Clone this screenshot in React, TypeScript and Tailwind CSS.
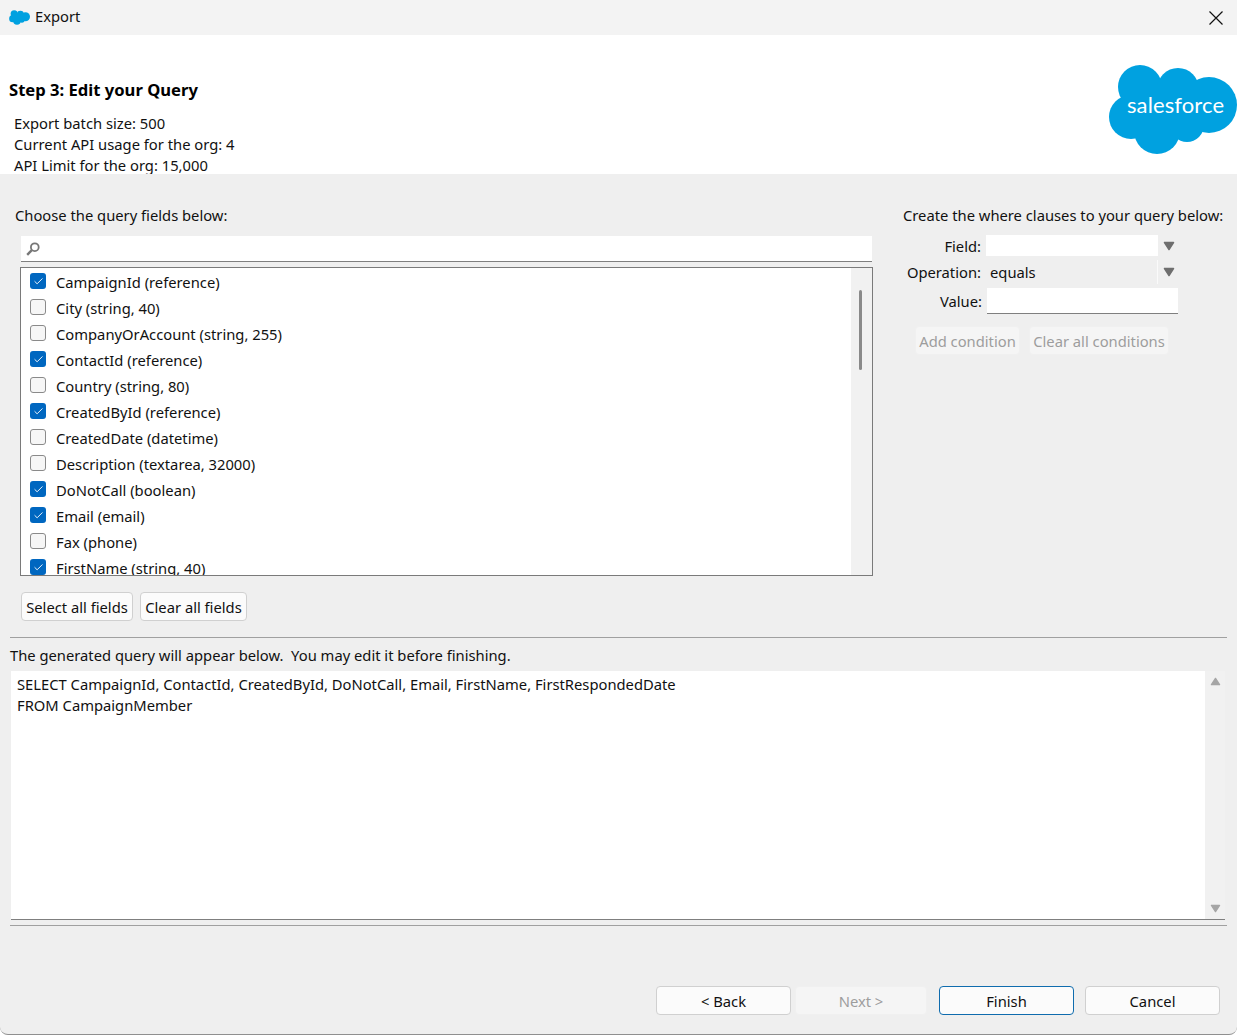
import { Check } from "lucide-react"

const fields = [
  { label: "CampaignId (reference)", checked: true },
  { label: "City (string, 40)", checked: false },
  { label: "CompanyOrAccount (string, 255)", checked: false },
  { label: "ContactId (reference)", checked: true },
  { label: "Country (string, 80)", checked: false },
  { label: "CreatedById (reference)", checked: true },
  { label: "CreatedDate (datetime)", checked: false },
  { label: "Description (textarea, 32000)", checked: false },
  { label: "DoNotCall (boolean)", checked: true },
  { label: "Email (email)", checked: true },
  { label: "Fax (phone)", checked: false },
  { label: "FirstName (string, 40)", checked: true },
]

function Cloud({ className, withText }: { className: string; withText?: boolean }) {
  return (
    <svg viewBox="0 0 129 90" className={className}>
      <g fill="#00a1e0">
        <circle cx="32" cy="22" r="22" />
        <circle cx="70" cy="24" r="21" />
        <circle cx="101" cy="40" r="28" />
        <circle cx="23" cy="52" r="22" />
        <circle cx="49" cy="66" r="23" />
        <circle cx="79" cy="60" r="17" />
        <rect x="22" y="22" width="80" height="42" />
      </g>
      {withText && (
        <text x="19" y="48" fill="#fff" fontSize="22" fontFamily="Lato, sans-serif" textLength="97">
          salesforce
        </text>
      )}
    </svg>
  )
}

function Triangle({ up, className }: { up?: boolean; className: string }) {
  return (
    <svg viewBox="0 0 12 10" className={className}>
      <path
        d={up ? "M6 1.5 L10.5 8.5 L1.5 8.5 Z" : "M1.5 1.5 L10.5 1.5 L6 8.5 Z"}
        fill="currentColor"
        stroke="currentColor"
        strokeWidth="1.5"
        strokeLinejoin="round"
      />
    </svg>
  )
}

function SmallButton({ children, disabled, className }: { children: string; disabled?: boolean; className: string }) {
  return (
    <button
      className={`h-[29px] rounded-[4px] border pt-px text-center ${
        disabled ? "border-[#f0f0f0] bg-[#f5f5f5] text-[#9d9d9d]" : "border-[#d0d0d0] bg-[#fbfbfb] text-[#111]"
      } ${className}`}
    >
      {children}
    </button>
  )
}

export default function App() {
  return (
    <div className="relative flex h-[1035px] w-[1237px] flex-col overflow-hidden rounded-b-[8px] border-b border-[#8f8f8f] bg-[#efefef] font-['Noto_Sans',sans-serif] text-[14.75px] leading-[21px] text-[#111]">
      {/* title bar */}
      <div className="flex h-[35px] shrink-0 items-center bg-[#f3f3f3] pl-[9px] pr-[14px]">
        <Cloud className="h-[15px] w-[21px]" />
        <span className="ml-[5px] -translate-y-px">Export</span>
        <svg viewBox="0 0 14 14" className="ml-auto h-[14px] w-[14px] text-[#111]" fill="none" stroke="currentColor" strokeWidth="1.2">
          <path d="M0.5 0.5 L13.5 13.5 M13.5 0.5 L0.5 13.5" />
        </svg>
      </div>

      {/* header */}
      <div className="flex h-[139px] shrink-0 justify-between overflow-hidden bg-white">
        <div className="pl-[9px] pt-[44px]">
          <h1 className="text-[16.6px] font-bold leading-[22px] text-black">Step 3: Edit your Query</h1>
          <div className="ml-[5px] mt-[12px]">
            <p>Export batch size: 500</p>
            <p>Current API usage for the org: 4</p>
            <p>API Limit for the org: 15,000</p>
          </div>
        </div>
        <Cloud withText className="mt-[30px] h-[90px] w-[129px]" />
      </div>

      {/* fields and where clauses */}
      <div className="flex h-[458px] shrink-0">
        <div className="w-[890px] shrink-0 pl-[15px] pt-[31px]">
          <p>Choose the query fields below:</p>
          <div className="ml-[6px] mt-[10px] flex h-[26px] w-[851px] items-center border-b border-[#7f7f7f] bg-white pl-[5px]">
            <svg viewBox="0 0 14 14" className="h-[14px] w-[14px] text-[#777]" fill="none" stroke="currentColor">
              <circle cx="8.8" cy="5.2" r="3.9" strokeWidth="1.8" />
              <path d="M5.8 8.2 L1.2 12.8" strokeWidth="2.4" />
            </svg>
          </div>
          <div className="ml-[5px] mt-[5px] flex h-[309px] w-[853px] overflow-hidden border border-[#7a7a7a] bg-white">
            <div className="min-w-0 flex-1 pl-[9px]">
              {fields.map((f) => (
                <div key={f.label} className="flex h-[26px] items-center">
                  {f.checked ? (
                    <span className="flex h-[16px] w-[16px] items-center justify-center rounded-[3px] bg-[#0067c0]">
                      <Check className="h-[11px] w-[11px] text-white" strokeWidth={2} />
                    </span>
                  ) : (
                    <span className="h-[16px] w-[16px] rounded-[3px] border border-[#8a8a8a] bg-[#f6f6f6]" />
                  )}
                  <span className="ml-[10px] translate-y-[0.5px]">{f.label}</span>
                </div>
              ))}
            </div>
            <div className="w-[21px] shrink-0 bg-[#f1f1f1] pl-[8px] pt-[22px]">
              <div className="h-[80px] w-[3px] rounded-full bg-[#8a8a8a]" />
            </div>
          </div>
          <div className="ml-[6px] mt-[16px] flex gap-[7px]">
            <SmallButton className="w-[112px]">Select all fields</SmallButton>
            <SmallButton className="w-[107px]">Clear all fields</SmallButton>
          </div>
        </div>

        <div className="flex-1 pl-[13px] pt-[31px]">
          <p>Create the where clauses to your query below:</p>
          <div className="mt-[9px] grid grid-cols-[78px_172px_20px] items-center gap-x-[5px]">
            <span className="h-[21px] translate-y-px text-right leading-[21px]">Field:</span>
            <div className="h-[21px] bg-white" />
            <Triangle className="h-[10px] w-[12px] text-[#6e6e6e]" />
          </div>
          <div className="mt-[4px] grid grid-cols-[78px_172px_20px] items-center gap-x-[5px]">
            <span className="text-right">Operation:</span>
            <div className="h-[24px] border-r border-[#fafafa] pl-[4px] leading-[24px]">equals</div>
            <Triangle className="h-[10px] w-[12px] text-[#6e6e6e]" />
          </div>
          <div className="mt-[4px] flex items-center">
            <span className="w-[79px] text-right">Value:</span>
            <div className="ml-[5px] h-[26px] w-[191px] border-b border-[#7f7f7f] bg-white" />
          </div>
          <div className="ml-[12px] mt-[12px] flex gap-[9px]">
            <SmallButton disabled className="w-[105px]">Add condition</SmallButton>
            <SmallButton disabled className="w-[140px]">Clear all conditions</SmallButton>
          </div>
        </div>
      </div>

      {/* generated query */}
      <div className="px-[10px] pt-[5px]">
        <div className="h-px bg-[#a0a0a0]" />
        <p className="mt-[7px]">The generated query will appear below.&nbsp; You may edit it before finishing.</p>
        <div className="ml-px mt-[5px] flex h-[249px] w-[1214px] border-b border-[#7f7f7f] bg-white">
          <div className="flex-1 pl-[6px] pt-[3px]">
            <p>SELECT CampaignId, ContactId, CreatedById, DoNotCall, Email, FirstName, FirstRespondedDate</p>
            <p>FROM CampaignMember</p>
          </div>
          <div className="flex w-[20px] shrink-0 flex-col items-center justify-between bg-[#f1f1f1] py-[6px]">
            <Triangle up className="h-[9px] w-[11px] text-[#a5a5a5]" />
            <Triangle className="h-[9px] w-[11px] text-[#a5a5a5]" />
          </div>
        </div>
        <div className="mt-[5px] h-px bg-[#a0a0a0]" />
      </div>

      {/* footer buttons */}
      <div className="mt-[60px] flex pl-[656px]">
        <SmallButton className="w-[135px]">{"< Back"}</SmallButton>
        <SmallButton disabled className="ml-[4px] w-[132px]">{"Next >"}</SmallButton>
        <button className="ml-[12px] h-[29px] w-[135px] rounded-[4px] border border-[#0f6cae] bg-[#fbfbfb] pt-px text-center">Finish</button>
        <SmallButton className="ml-[11px] w-[135px]">Cancel</SmallButton>
      </div>
    </div>
  )
}
